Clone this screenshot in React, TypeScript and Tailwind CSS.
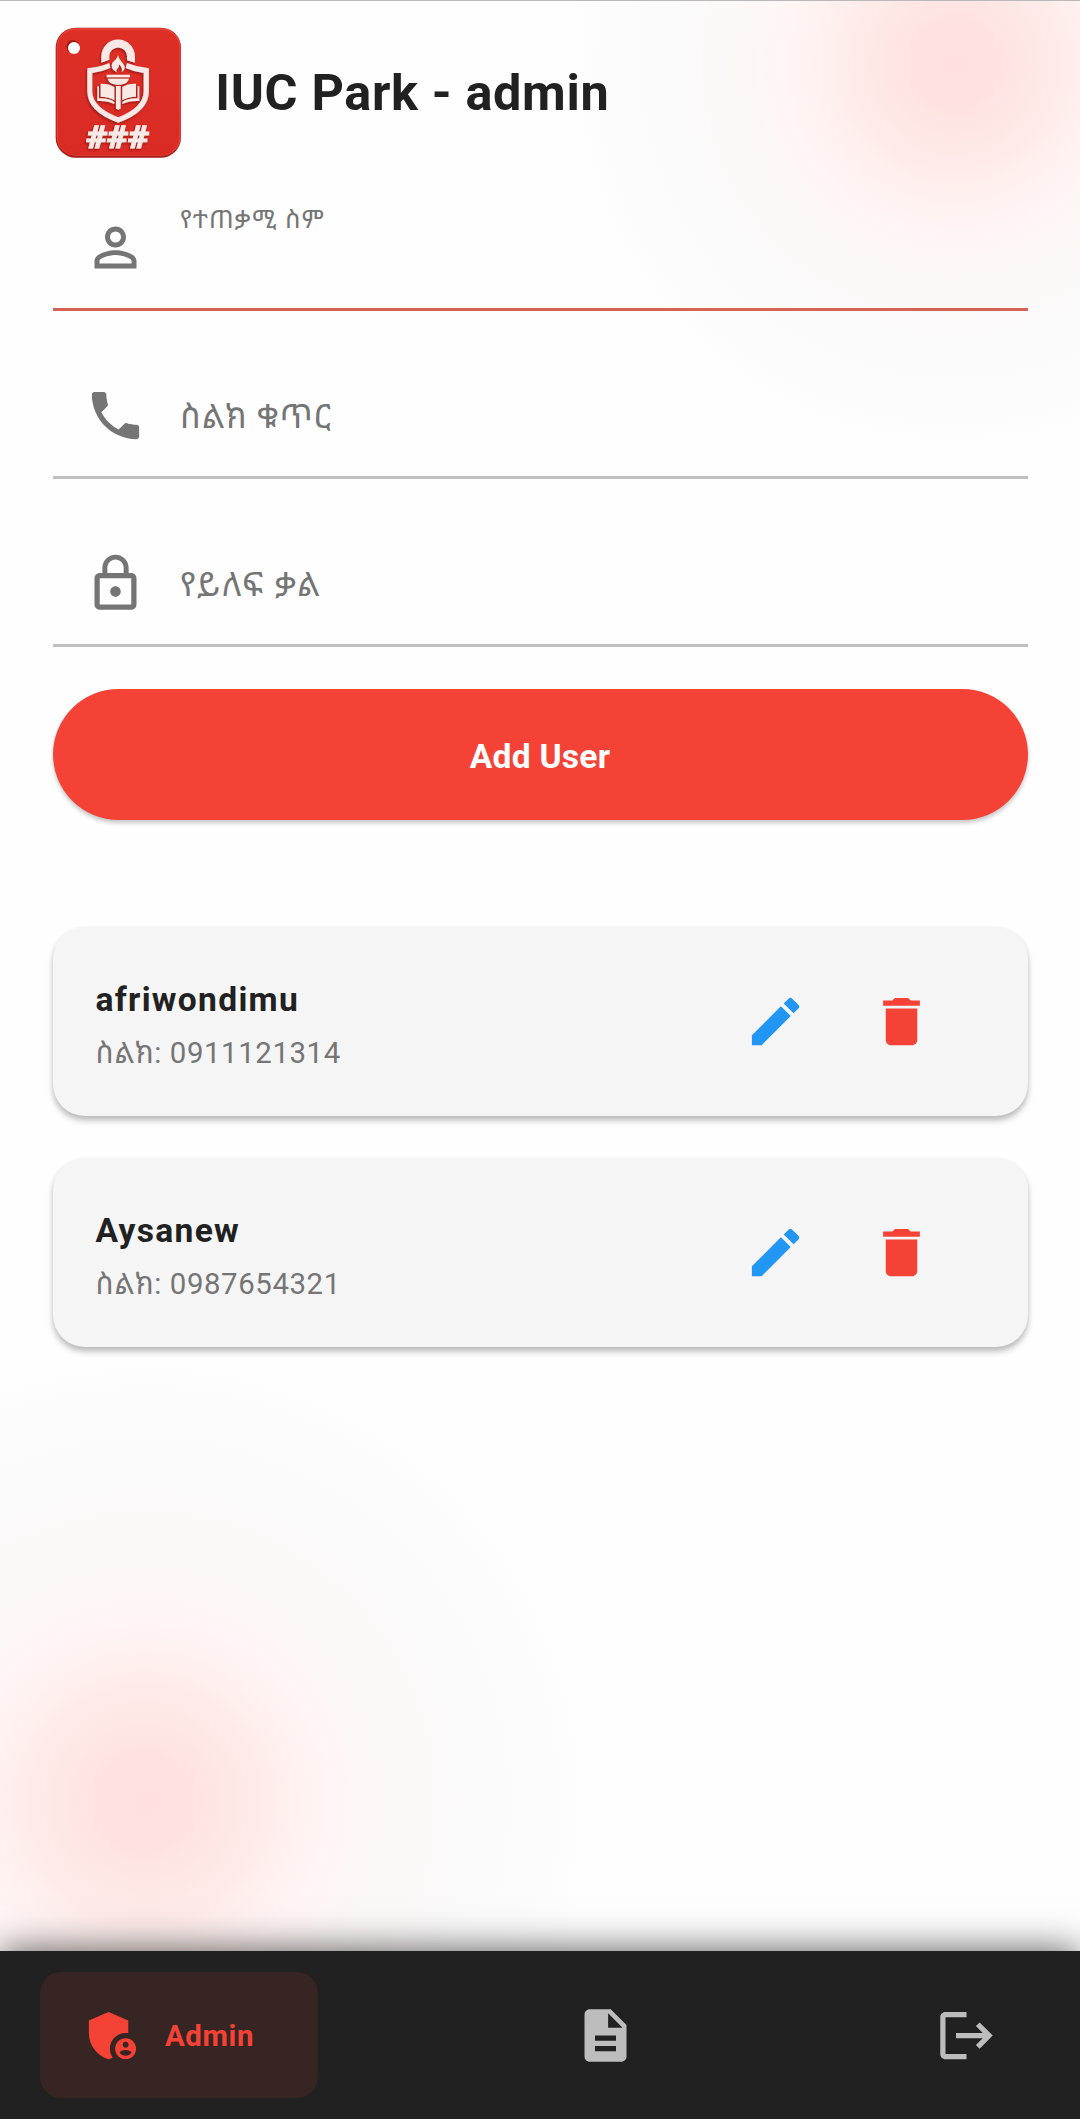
import type { ComponentType } from "react";
import {
  MdAdminPanelSettings,
  MdDelete,
  MdDescription,
  MdEdit,
  MdLogout,
  MdPhone,
} from "react-icons/md";

type IconProps = { className?: string };

function PersonIcon({ className }: IconProps) {
  return (
    <svg viewBox="0 0 24 24" fill="currentColor" className={className}>
      <path d="M12 5.9a2.1 2.1 0 1 1 0 4.2 2.1 2.1 0 0 1 0-4.2m0 9c2.97 0 6.1 1.46 6.1 2.1v1.1H5.9V17c0-.64 3.13-2.1 6.1-2.1M12 4C9.79 4 8 5.79 8 8s1.79 4 4 4 4-1.79 4-4-1.79-4-4-4zm0 9c-2.67 0-8 1.34-8 4v3h16v-3c0-2.66-5.33-4-8-4z" />
    </svg>
  );
}

function LockIcon({ className }: IconProps) {
  return (
    <svg viewBox="0 0 24 24" fill="currentColor" className={className}>
      <path d="M12 17c1.1 0 2-.9 2-2s-.9-2-2-2-2 .9-2 2 .9 2 2 2zm6-9h-1V6c0-2.76-2.24-5-5-5S7 3.24 7 6v2H6c-1.1 0-2 .9-2 2v10c0 1.1.9 2 2 2h12c1.1 0 2-.9 2-2V10c0-1.1-.9-2-2-2zM8.9 6c0-1.71 1.39-3.1 3.1-3.1s3.1 1.39 3.1 3.1v2H8.9V6zM18 20H6V10h12v10z" />
    </svg>
  );
}

function Logo() {
  return (
    <svg viewBox="45 80 382 396" className="ml-[2.5px] h-[132px] w-[127.3px] shrink-0">
      <defs>
        <filter id="relief" x="-10%" y="-10%" width="120%" height="125%">
          <feDropShadow dx="-3" dy="4" stdDeviation="3" floodColor="#7d0f0c" floodOpacity="0.75" />
        </filter>
        <linearGradient id="plate" x1="0" y1="0" x2="0" y2="1">
          <stop offset="0" stopColor="#de2f27" />
          <stop offset="1" stopColor="#d92b24" />
        </linearGradient>
      </defs>
      <rect x="47" y="82" width="376" height="390" rx="60" fill="#a81d18" />
      <rect x="50" y="84" width="372" height="382" rx="57" fill="#e9453c" />
      <rect x="53" y="88" width="365" height="376" rx="53" fill="url(#plate)" />
      <circle cx="99" cy="139" r="20" fill="#a01a16" />
      <circle cx="102" cy="143" r="18" fill="#fff" />
      <g filter="url(#relief)" fill="#f8e9e6">
        <path d="M184 187v-19a50 50 0 0 1 101 0v19l-24-7v-12a26 26 0 0 0-53 0v10z" />
        <path d="M142 204q35-3 66-16l3 15q-26 12-54 15v55q0 48 78 78 76-30 76-78v-55q-28-3-54-15l4-15q32 13 66 16v69q0 62-92 94-93-32-93-94z" />
        <path d="M234 164q3 14 14 24 14 18-3 28 4-12-7-24-1 10-6 13-5 5-2 11-22-11-12-30 14-10 16-22z" />
        <path d="M200 223h70v8h-70zM203 235h64q-4 16-26 18h-12q-22-2-26-18z" />
        <path d="M228 257h14v68l-7 3-7-3z" />
        <path d="M182 250q24-1 41 10v40q-17-11-41-11zM288 250q-24-1-41 10v40q17-11 41-11z" />
        <path d="M172 258h5v36q30-1 46 11v6q-22-11-51-9zM298 258h-5v36q-30-1-46 11v6q22-11 51-9z" />
        <text
          x="0"
          y="0"
          transform="translate(137 442) skewX(-4)"
          textLength="188"
          lengthAdjust="spacingAndGlyphs"
          className="font-[Roboto] text-[94px] font-black"
          stroke="#f8e9e6"
          strokeWidth="3"
        >
          ###
        </text>
      </g>
    </svg>
  );
}

type FieldProps = {
  label: string;
  Icon: ComponentType<IconProps>;
  active?: boolean;
  tracking: string;
};

function Field({ label, Icon, active, tracking }: FieldProps) {
  return (
    <div
      className={`flex h-[126px] gap-[33px] border-b-[3px] pl-[31.5px] text-[#757575] ${
        active ? "border-[#d66456]" : "border-[#c0c0c0]"
      }`}
    >
      <Icon className="mt-[2px] size-[63px] self-center" />
      <span
        className={`${tracking} ${
          active ? "mt-[19px] text-[25.2px] leading-[32px]" : "self-center pt-[4px] text-[33.6px] leading-[40px]"
        }`}
      >
        {label}
      </span>
    </div>
  );
}

function UserCard({ name, phone }: { name: string; phone: string }) {
  return (
    <article className="flex h-[189px] items-center rounded-[32px] bg-[#f5f5f5] pl-[43px] pr-[94.5px] shadow-[0_5px_6px_rgba(0,0,0,0.22),0_2px_5px_rgba(0,0,0,0.08)]">
      <div className="flex-1 pt-[10px]">
        <h2 className="text-[33.6px] font-bold leading-[54px] tracking-[1.3px] text-[#212121]">{name}</h2>
        <p className="text-[29.4px] leading-[53px] tracking-[0.58px] text-[#757575]">ስልክ: {phone}</p>
      </div>
      <div className="flex gap-[63px]">
        <MdEdit className="size-[63px] text-[#2196f3]" />
        <MdDelete className="size-[63px] text-[#f44336]" />
      </div>
    </article>
  );
}

const users = [
  { name: "afriwondimu", phone: "0911121314" },
  { name: "Aysanew", phone: "0987654321" },
];

export default function App() {
  return (
    <div className="flex h-[2119px] w-full flex-col overflow-hidden border-t border-[#b9b9b9] bg-[#fefefe] bg-[radial-gradient(circle_390px_at_955px_63px,#ffe0de_0%,#ffe1df_9%,#fee7e5_19%,#feecea_28%,#fff1f0_35%,#fff5f4_43%,#fdf7f6_50%,#fbf8f6_57%,#fbf9f9_66%,#fbfbfb_75%,#fcfcfd_88%,#fefefe00_100%),radial-gradient(circle_450px_at_145px_1801px,#ffe0de_0%,#ffe1df_9%,#fee7e5_18%,#feecea_27%,#fff1f0_33%,#fff5f4_40%,#fdf7f6_47%,#fbf8f6_55%,#fbf9f9_66%,#fbfbfb_75%,#fcfcfd_88%,#fefefe00_100%)] font-[Roboto,'Noto_Sans_Ethiopic',sans-serif]">
      <main className="flex flex-1 flex-col px-[52.5px] pt-[26px]">
        <header className="flex h-[132px] items-center gap-[33px]">
          <Logo />
          <h1 className="text-[50.4px] font-bold leading-[60px] tracking-[0.66px] text-[#212121]">IUC Park - admin</h1>
        </header>

        <form className="mt-[26px] flex flex-col gap-[42px]">
          <Field label="የተጠቃሚ ስም" Icon={PersonIcon} tracking="tracking-[1.2px]" active />
          <Field label="ስልክ ቁጥር" Icon={MdPhone} tracking="tracking-[0.85px]" />
          <Field label="የይለፍ ቃል" Icon={LockIcon} tracking="tracking-[1.8px]" />
          <button
            type="button"
            className="h-[130.5px] rounded-full bg-[#f44336] pt-[5px] text-[33.6px] font-bold tracking-[0.26px] text-white shadow-[0_3px_4px_rgba(0,0,0,0.22)]"
          >
            Add User
          </button>
        </form>

        <section className="mt-[107px] flex flex-col gap-[42px]">
          {users.map((user) => (
            <UserCard key={user.name} {...user} />
          ))}
        </section>
      </main>

      <nav className="flex h-[168px] items-center bg-[#212121] pl-[39.5px] pr-[82px] text-[#bdbdbd] shadow-[0_0_36px_rgba(0,0,0,0.67)]">
        <div className="flex h-[126px] w-[278px] items-center rounded-[21px] bg-[#372523] pl-[41.5px] text-[#f44336]">
          <MdAdminPanelSettings className="size-[63px]" />
          <span className="ml-[21px] pt-[2px] text-[29.4px] font-bold tracking-[0.6px]">Admin</span>
        </div>
        <MdDescription className="ml-[256.5px] size-[63px]" />
        <MdLogout className="ml-auto size-[63px]" />
      </nav>
    </div>
  );
}
